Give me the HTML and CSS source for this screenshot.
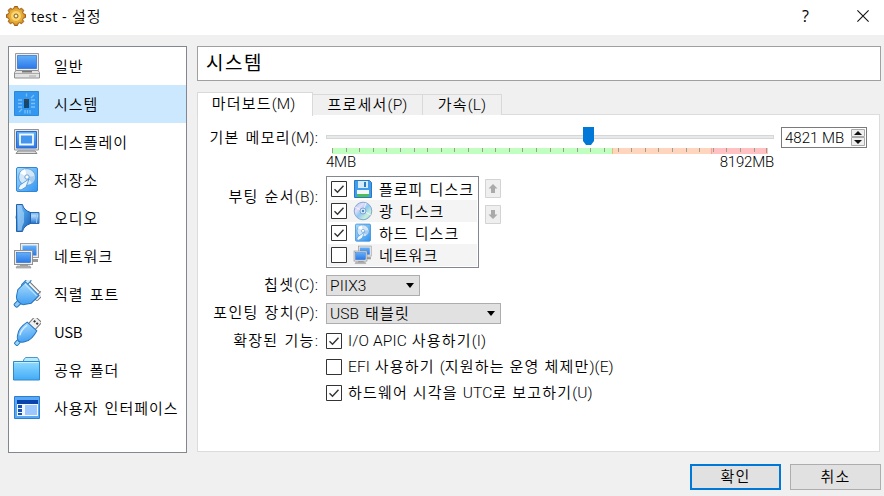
FILE: index.html
```
<!DOCTYPE html>
<html lang="ko">
<head>
<meta charset="utf-8">
<title>test - 설정</title>
<link rel="stylesheet" href="styles.css">
</head>
<body>
<svg class="defs" width="0" height="0">
  <defs>
    <linearGradient id="blue" x1="0" y1="0" x2="0" y2="1"><stop offset="0" stop-color="#62b0fa"/><stop offset="1" stop-color="#2b78e8"/></linearGradient>
    <linearGradient id="sky" x1="0" y1="0" x2="1" y2="1"><stop offset="0" stop-color="#a9ddff"/><stop offset="1" stop-color="#2f93f0"/></linearGradient>
    <linearGradient id="fold" x1="0" y1="0" x2="0" y2="1"><stop offset="0" stop-color="#8edcff"/><stop offset="1" stop-color="#43aaf7"/></linearGradient>
    <linearGradient id="horn" x1="0" y1="0" x2="0" y2="1"><stop offset="0" stop-color="#6fb0ec"/><stop offset=".3" stop-color="#b5dcfa"/><stop offset="1" stop-color="#1f6fd0"/></linearGradient>
    <linearGradient id="cone" x1="0" y1="0" x2="1" y2="1"><stop offset="0" stop-color="#8cc6f5"/><stop offset=".4" stop-color="#4d9fe8"/><stop offset="1" stop-color="#1558b0"/></linearGradient>
    <radialGradient id="gold"><stop offset="0" stop-color="#fff0a0"/><stop offset=".6" stop-color="#f3b83c"/><stop offset="1" stop-color="#c77d17"/></radialGradient>
    <linearGradient id="disc" x1="0" y1="0" x2="1" y2="1"><stop offset="0" stop-color="#8ec4f5"/><stop offset=".3" stop-color="#e6dcf8"/><stop offset=".5" stop-color="#8fc8f4"/><stop offset=".75" stop-color="#c8f0d8"/><stop offset="1" stop-color="#71aeea"/></linearGradient>
    <symbol id="i-disk" viewBox="0 0 28 28">
      <rect x="3.500" y="1.500" width="21" height="24" rx="1.500" fill="url(#sky)" stroke="#3287d4"/>
      <circle cx="14" cy="11" r="8.400" fill="#d3e7f8" stroke="#5b9edb"/>
      <path d="M14 11 7 7A8 8 0 0 1 12 3Z" fill="#fff"/><path d="m14 11 8-1a8 8 0 0 1-3 7Z" fill="#a8cdee"/>
      <circle cx="14" cy="11" r="2.200" fill="#fff" stroke="#6aa3d6"/>
      <path d="m16 13-9 6-2 4 3 1 5-3Z" fill="#eef7fd" stroke="#3d8fd8" stroke-width=".8"/>
    </symbol>
    <symbol id="i-net" viewBox="0 0 28 28">
      <path d="M18 17h7v3h-7z" fill="#999"/>
      <rect x="7.500" y="1.500" width="18" height="14" fill="#eee" stroke="#9b9b9b"/>
      <rect x="9.500" y="3.500" width="14" height="10" fill="url(#blue)"/>
      <path d="M7 22h8v3H7z" fill="#aaa"/>
      <rect x="1.500" y="8.500" width="18" height="14" fill="#eee" stroke="#929292"/>
      <rect x="3.500" y="10.500" width="14" height="10" fill="url(#blue)" stroke="#2b6ac2" stroke-width=".6"/>
      <path d="M4 24h13l1 2H3z" fill="#bbb" stroke="#888" stroke-width=".6"/>
    </symbol>
    <symbol id="i-check" viewBox="0 0 16 16"><path d="M.5.500h15v15H.5z" fill="#fff" stroke="#333"/><path d="m3.500 8.200 3 3 6-6.500" fill="none" stroke="#333" stroke-width="1.400"/></symbol>
    <symbol id="i-empty" viewBox="0 0 16 16"><path d="M.5.500h15v15H.5z" fill="#fff" stroke="#333"/></symbol>
  </defs>
</svg>

<header class="titlebar">
  <svg class="gear" viewBox="0 0 20 20">
    <path d="m8.500.5 3 0 .6 2 1.600.7 1.900-1 2.100 2.100-1 1.900.7 1.600 2.100.7v3l-2.100.6-.7 1.600 1 1.900-2.100 2.100-1.900-1-1.600.7-.6 2.100h-3l-.7-2.100-1.600-.7-1.900 1-2.100-2.100 1-1.900-.7-1.600-2-.6v-3l2-.7.7-1.600-1-1.900 2.100-2.100 1.900 1 1.600-.7z" fill="url(#gold)" stroke="#9a5e1a"/>
    <circle cx="10" cy="10" r="5.500" fill="#f9d56d" stroke="#e0a63a"/><circle cx="10" cy="10" r="2" fill="#fff4cf" stroke="#8b5413"/>
  </svg>
  <h1 class="title">test - <span>설정</span></h1>
  <span class="help">?</span>
  <svg class="close" viewBox="0 0 12 12"><path d="m.4.4 11.200 11.200m0-11.200L.4 11.600" stroke="#111" stroke-width="1.100"/></svg>
</header>

<main class="body">
  <nav class="side">
    <a class="item"><svg class="ic" viewBox="0 0 28 28"><path d="M2.500 1.500h23v17h-23z" fill="#eee" stroke="#9a9a9a"/><path d="M4.500 3.500h19v13h-19z" fill="url(#blue)" stroke="#2a6ccd" stroke-width=".7"/><path d="M3 18.500h22l1.500 2v5.500h-25v-5.500z" fill="#e3e3e3" stroke="#8e8e8e"/><path d="M2 21.500h24M16 24h7" stroke="#aaa"/><path d="M9 19h10v1.500H9z" fill="#777"/></svg>일반</a>
    <a class="item on"><svg class="ic" viewBox="0 0 28 28"><path d="M1.500 1.500h24v24h-24z" fill="#3398f1" stroke="#2e87d9"/><path d="M11 9h5v9h-5z" fill="#17476f"/><path d="M11 9h5v2h-5z" fill="#39454d"/><path d="M5 10h4M5 13.500h4M5 17h4M18 10h4M18 13.500h4M18 17h4M13.500 3.500v3M12 20v3.500M14.500 20v3.500M17 20v3.500M9 19l-3 3M18 8l3-3" stroke="#7cc0f8" stroke-width="1.300"/></svg>시스템</a>
    <a class="item"><svg class="ic" viewBox="0 0 28 28"><path d="M1.500 1.500h24v20.500h-24z" fill="#e7e7e7" stroke="#929292"/><path d="M3.500 3.500h20v16.500h-20z" fill="url(#blue)" stroke="#2a6ccd"/><path d="M7 6.500h13v10H7z" fill="#4395ed" stroke="#f2faff" stroke-width="1.800"/><path d="M5 23h17l2 2.500H3z" fill="#ddd" stroke="#888"/></svg>디스플레이</a>
    <a class="item"><svg class="ic"><use href="#i-disk"/></svg>저장소</a>
    <a class="item"><svg class="ic" viewBox="0 0 28 28"><path d="M4 10q-3 3 0 7z" fill="#256cbb"/><path d="M15 8.500h11v11H15z" fill="url(#horn)" stroke="#2d6db4"/><path d="M23.500 9v10" stroke="#8dc5f4"/><path d="M3.500.500h6q1 5.500 8 8v11q-7 2.500-8 8h-6z" fill="url(#cone)" stroke="#2561ab"/><path d="M5 1.500h3.500q.5 5 2.500 7v10q-2 3-2.500 8H5z" fill="#a5d2f6" opacity=".65"/></svg>오디오</a>
    <a class="item"><svg class="ic"><use href="#i-net"/></svg>네트워크</a>
    <a class="item"><svg class="ic" viewBox="0 0 28 28"><g transform="rotate(45 14 14)"><path d="M5 3.500h19v5H5z" fill="#f4f4f4" stroke="#777"/><rect x="3.500" y="1" width="4" height="11" rx="1.500" fill="#cfe9fb" stroke="#2e7fc4"/><rect x="22" y="1" width="4" height="11" rx="1.500" fill="#eee" stroke="#777"/><rect x="12" y="23" width="4.500" height="8" rx="1.500" fill="#8fcbf6" stroke="#2675bd"/><path d="M4.500 6.500h19v11l-4 6q-1.500 2-5.500 2t-5.500-2l-4-6z" fill="url(#sky)" stroke="#2775bd"/><path d="M6 8.500h16" stroke="#c8eaff"/></g></svg>직렬 포트</a>
    <a class="item"><svg class="ic" viewBox="0 0 28 28"><g transform="rotate(42 14 14)"><path d="M9.500-3h9v10h-9z" fill="#efefef" stroke="#777"/><path d="M11.500 0h2v2h-2zM15 0h2v2h-2z" fill="#333"/><rect x="12" y="26" width="4" height="5" rx="1" fill="#9ed6fa" stroke="#2b7cc4"/><path d="M7.500 6.500h13q2.500 10-1 15-2 4.500-5.500 5-3.500-.5-5.500-5-3.500-5-1-15z" fill="url(#sky)" stroke="#2877bf"/><path d="M9.500 9q-1.500 8 1.500 12" fill="none" stroke="#d5efff" stroke-width="1.500"/></g></svg><i>USB</i></a>
    <a class="item"><svg class="ic" viewBox="0 0 28 28"><path d="M10.500 6V4l2-2.500h12L26 4v3" fill="#b9eaff" stroke="#4a98cc"/><path d="M.5 5.500h26v18.500H.5z" fill="url(#fold)" stroke="#3188c9"/><path d="M1.500 6.500h24" stroke="#c7f0ff"/></svg>공유 폴더</a>
    <a class="item"><svg class="ic" viewBox="0 0 28 28"><path d="M1.500 2.500h25v22h-25z" fill="#58a8f5" stroke="#2d7fd0"/><path d="M4 6h21v4H4z" fill="#0b43ad"/><path d="M4 10h21v12H4z" fill="#f0f6ff"/><path d="M12 11h12v10H12z" fill="#9cc7ff"/><path d="M5 11h4v3H5zM5 15h4v3H5zM5 19h4v2H5z" fill="#174fb3"/></svg>사용자 인터페이스</a>
  </nav>

  <section class="content">
    <h2 class="heading">시스템</h2>
    <div class="tabs">
      <span class="tab active">마더보드<i>(M)</i></span><span class="tab t2">프로세서<i>(P)</i></span><span class="tab t3">가속<i>(L)</i></span>
    </div>
    <div class="panel">
      <div class="row mem">
        <label class="lab">기본 메모리<i>(M):</i></label>
        <div class="slider">
          <svg class="track" width="448" height="30" viewBox="0 0 448 30" shape-rendering="crispEdges">
            <path d="M.5 9.500h447v3H.5z" fill="#e7eaea" stroke="#d6d6d6"/>
            <path d="M6 22h280v6H6z" fill="#c1ffc1"/><path d="M286 22h99v6h-99z" fill="#ffd5be"/><path d="M385 22h57v6h-57z" fill="#ffc1c1"/>
            <path d="M286.500 22v6" stroke="#e0c080"/><path d="M385.500 22v6" stroke="#ffa0a0"/>
            <path d="M6.500 22v5m14-5v4m13-4v4m14-4v4m13-4v4m14-4v4m14-4v4m13-4v4m14-4v4m13-4v4m14-4v4m14-4v4m13-4v4m14-4v4m13-4v4m14-4v4m14-4v4m13-4v4m14-4v4m13-4v4m14-4v4m14-4v4m13-4v4m14-4v4m13-4v4m14-4v4m14-4v4m13-4v4m14-4v4m13-4v4m14-4v4m14-4v4m12-4v5" fill="none" stroke="#9d9d8c"/>
            <path d="M257 1h11v14l-3 4h-5l-3-4z" fill="#0078d7" shape-rendering="auto"/>
          </svg>
          <div class="ends"><span>4MB</span><span>8192MB</span></div>
        </div>
        <div class="spin"><span>4821 MB</span>
          <svg width="14" height="17" viewBox="0 0 14 17"><path d="M.5.500h13v7H.5zM.5 8.500h13v8H.5z" fill="#efefef" stroke="#aaa"/><path d="m7 2 4 4H3zM3 11h8l-4 4z" fill="#111"/></svg>
        </div>
      </div>

      <div class="row boot">
        <label class="lab">부팅 순서<i>(B):</i></label>
        <div class="list">
          <div class="opt"><svg class="cb"><use href="#i-check"/></svg><svg class="sm" viewBox="0 0 20 20"><path d="M1.500 1.500h15l2 2v15h-17z" fill="#419deb" stroke="#2879c5"/><path d="M5 2h10v7H5z" fill="#d5ecfb"/><path d="M11 3h2v5h-2z" fill="#287cc4"/><path d="M4 11h12v7H4z" fill="#f2f8fa"/><path d="M4 15h12v3H4z" fill="#4fbd55"/></svg>플로피 디스크</div>
          <div class="opt"><svg class="cb"><use href="#i-check"/></svg><svg class="sm" viewBox="0 0 20 20"><circle cx="10" cy="10" r="8.800" fill="url(#disc)" stroke="#83a9cf"/><path d="M10 10 2 6M10 10l3-8M10 10l8 4" stroke="#fff" opacity=".7"/><circle cx="10" cy="10" r="3" fill="#d9e9f7" stroke="#7aa7d4"/><circle cx="10" cy="10" r="1.200" fill="#4f86bd"/></svg>광 디스크</div>
          <div class="opt"><svg class="cb"><use href="#i-check"/></svg><svg class="sm"><use href="#i-disk"/></svg>하드 디스크</div>
          <div class="opt"><svg class="cb"><use href="#i-empty"/></svg><svg class="sm"><use href="#i-net"/></svg>네트워크</div>
        </div>
        <div class="moves">
          <svg viewBox="0 0 16 19"><path d="M.5.500h15v18H.5z" fill="#efefef" stroke="#d3d3d3"/><path d="m8 5 4.500 4.500H10V14H6V9.500H3.500z" fill="#aaa"/></svg>
          <svg viewBox="0 0 16 19"><path d="M.5.500h15v18H.5z" fill="#efefef" stroke="#d3d3d3"/><path d="m8 14 4.500-4.500H10V5H6v4.500H3.500z" fill="#aaa"/></svg>
        </div>
      </div>

      <div class="row chip"><label class="lab">칩셋<i>(C):</i></label><div class="combo c1"><i>PIIX3</i><b></b></div></div>
      <div class="row point"><label class="lab">포인팅 장치<i>(P):</i></label><div class="combo c2"><span><i>USB</i> 태블릿</span><b></b></div></div>
      <div class="row ext"><label class="lab">확장된 기능<i>:</i></label><div class="check"><svg class="cb"><use href="#i-check"/></svg><span><i>I/O APIC</i> 사용하기<i>(I)</i></span></div></div>
      <div class="row ext"><span class="lab"></span><div class="check"><svg class="cb"><use href="#i-empty"/></svg><span><i>EFI</i> 사용하기 <i>(</i>지원하는 운영 체제만<i>)(E)</i></span></div></div>
      <div class="row ext"><span class="lab"></span><div class="check"><svg class="cb"><use href="#i-check"/></svg><span>하드웨어 시각을 <i>UTC</i>로 보고하기<i>(U)</i></span></div></div>
    </div>
  </section>
</main>
<footer class="foot"><button class="btn ok">확인</button><button class="btn">취소</button></footer>
</body>
</html>
```
FILE: styles.css
```
* { box-sizing: border-box; }
body {
  margin: 0; width: 884px; height: 496px; overflow: hidden;
  background: #f0f0f0; color: #000;
  font: 350 15px/20px Roboto, "Noto Sans CJK KR", sans-serif;
  letter-spacing: 1.2px; white-space: nowrap;
}
i { font-style: normal; font-size: 15.500px; letter-spacing: .1px; }
svg { display: block; flex: none; }
.defs { position: absolute; }

.titlebar { display: flex; align-items: center; height: 35px; padding: 0 15px 3px 6px; background: #fff; }
.gear { width: 20px; height: 20px; }
.title { margin: 0 auto 0 5px; font: 400 14.500px/20px "Open Sans", "Noto Sans CJK KR", sans-serif; letter-spacing: .35px; }
.title span { font-weight: 350; font-size: 15px; letter-spacing: .8px; margin-left: 1px; }
.help { margin-right: 48px; font: 16px/20px "Open Sans", sans-serif; letter-spacing: 0; }
.close { width: 12px; height: 12px; }

.body { display: flex; gap: 10px; padding: 11px 3px 0 8px; }
.side { width: 179px; height: 407px; border: 1px solid #828790; background: #fff; }
.item {
  display: flex; align-items: center; gap: 13px; height: 38px; padding-left: 4px;
  font-family: "Noto Sans CJK KR", sans-serif; font-size: 15px; letter-spacing: 1px; word-spacing: 1px;
}
.item i { font-size: 15px; letter-spacing: -.4px; }
.item.on { background: #cce8ff; }
.ic { width: 28px; height: 28px; }

.content { width: 684px; }
.heading {
  display: flex; align-items: center; margin: 0; height: 35px; padding: 1px 0 0 8px;
  border: 1px solid #a0a0a0; background: #fff; font-size: 19px; font-weight: 400; letter-spacing: 1.500px;
}
.tabs { display: flex; align-items: flex-end; height: 34px; }
.tab {
  height: 21px; border: 1px solid #d9d9d9; border-left: 0; border-bottom: 0;
  background: #f0f0f0; text-align: center; line-height: 20px;
}
.tab.active { width: 116px; margin-bottom: -1px; height: 24px; padding-right: 3px; border-left: 1px solid #d9d9d9; background: #fff; z-index: 1; line-height: 22px; }
.t2 { width: 110px; }
.t3 { width: 79px; }
.panel { width: 683px; height: 338px; margin-top: -1px; padding-top: 12px; border: 1px solid #dcdcdc; background: #fff; }
.row { display: flex; align-items: flex-start; }
.lab { width: 120px; margin-right: 8px; text-align: right; word-spacing: 1px; letter-spacing: 1.300px; }
.mem { height: 49px; }
.mem .lab { padding-top: 1px; }
.slider { width: 448px; margin-right: 7px; }
.track { margin-top: -1px; }
.ends { display: flex; justify-content: space-between; margin-top: -4px; letter-spacing: -.2px; }
.spin {
  display: flex; align-items: center; justify-content: space-between;
  width: 86px; height: 21px; padding: 0 1px 0 3px; border: 1px solid #7a7a7a; letter-spacing: 0;
}
.boot { height: 99px; }
.boot .lab { padding-top: 11px; }
.list { width: 153px; height: 92px; padding: 1px; border: 1px solid #828790; }
.opt { display: flex; align-items: center; height: 22px; padding-left: 3px; font-family: "Noto Sans CJK KR", sans-serif; letter-spacing: 1px; word-spacing: 1px; line-height: 18px; }
.opt:nth-child(even) { background: #f4f4f4; }
.cb { width: 16px; height: 16px; }
.sm { width: 20px; height: 20px; margin: 0 6px; }
.moves { display: flex; flex-direction: column; gap: 7px; padding: 3px 0 0 6px; }
.moves svg { width: 16px; height: 19px; }
.combo { display: flex; align-items: center; justify-content: space-between; height: 21px; padding: 0 5px 0 3px; border: 1px solid #adadad; background: #e1e1e1; word-spacing: 1px; }
.combo b { border: 4px solid transparent; border-top: 5px solid #000; border-bottom: 0; }
.c1 { width: 94px; }
.c2 { width: 175px; }
.chip, .point { height: 28px; }
.ext { height: 26px; }
.check { display: flex; align-items: center; gap: 6px; height: 20px; }

.foot { display: flex; justify-content: flex-end; gap: 9px; padding: 11px 3px 0 0; }
.btn { width: 91px; height: 26px; padding: 0; border: 1px solid #adadad; background: #e1e1e1; color: #000; font: inherit; letter-spacing: 1.200px; }
.btn.ok { border: 2px solid #0078d7; }
```
